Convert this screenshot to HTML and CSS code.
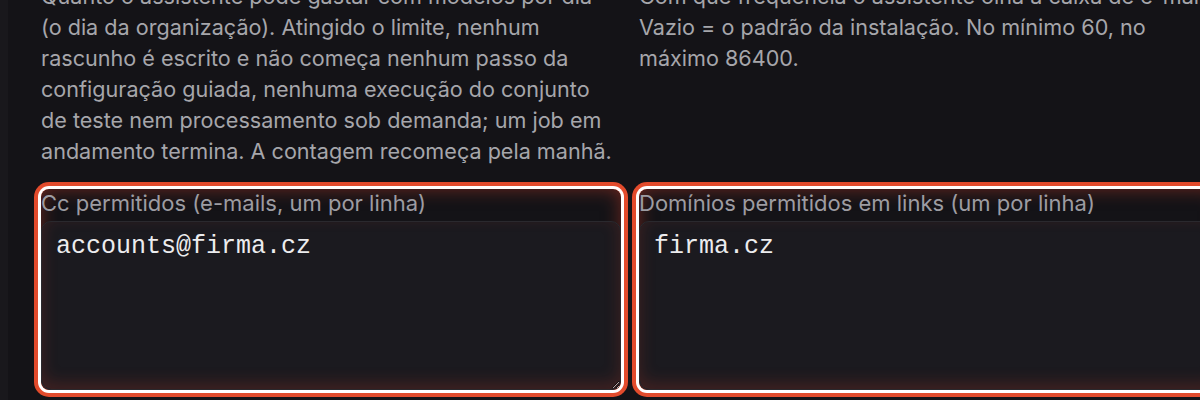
FILE: index.html
```html
<!DOCTYPE html>
<html lang="pt">
<head>
<meta charset="utf-8">
<title>Configurações</title>
<link rel="stylesheet" href="styles.css">
</head>
<body>
<div class="shell">
  <aside class="edge"></aside>
  <main class="content">
    <div class="grid">
      <p class="help">Quanto o assistente pode gastar com modelos por dia (o dia da organização). Atingido o limite, nenhum rascunho é escrito e não começa nenhum passo da configuração guiada, nenhuma execução do conjunto de teste nem processamento sob demanda; um job em andamento termina. A contagem recomeça pela manhã.</p>
      <p class="help">Com que frequência o assistente olha a caixa de <span class="nw">e-mail.</span> Vazio = o padrão da instalação. No mínimo 60, no máximo 86400.</p>
      <div class="field hl">
        <label class="label" for="cc">Cc permitidos (e-mails, um por linha)</label>
        <textarea id="cc" class="input" spellcheck="false">accounts@firma.cz</textarea>
      </div>
      <div class="field hl">
        <label class="label" for="dom">Domínios permitidos em links (um por linha)</label>
        <textarea id="dom" class="input" spellcheck="false">firma.cz</textarea>
      </div>
    </div>
  </main>
</div>
</body>
</html>
```
FILE: styles.css
```css
html, body {
  margin: 0;
  padding: 0;
  background: #141317;
  color-scheme: dark;
  overflow: hidden;
}
.shell {
  display: flex;
  min-height: 400px;
}
.edge {
  width: 8px;
  flex: none;
  background: #19181c;
}
.content {
  flex: 1;
  padding-left: 33px;
  margin-top: -19px;
}
.grid {
  display: grid;
  grid-template-columns: 580px 580px;
  column-gap: 18px;
  row-gap: 22px;
  width: 1178px;
}
.help {
  margin: 0;
  padding-right: 7px;
  font-family: Inter, "Noto Sans", sans-serif;
  font-size: 21.6px;
  line-height: 31px;
  color: #a6a6ab;
}
.nw {
  white-space: nowrap;
}
.field {
  display: flex;
  flex-direction: column;
  gap: 4px;
  border-radius: 8px;
}
.hl {
  box-shadow: 0 0 0 3px #ffffff, 0 0 0 7px #e24b2c, inset 0 0 18px rgba(200, 60, 40, 0.5);
}
.label {
  font-family: Inter, "Noto Sans", sans-serif;
  font-size: 22px;
  line-height: 28px;
  color: #9d9ca2;
}
.input {
  display: block;
  box-sizing: border-box;
  width: 100%;
  height: 169px;
  margin: 0;
  padding: 10px 14px;
  border: 1px solid #2a292e;
  border-radius: 10px;
  background: #1b1a1f;
  color: #ececee;
  font-family: "Liberation Mono", monospace;
  font-size: 25px;
  line-height: 30px;
  outline: none;
  resize: vertical;
  box-shadow: inset 0 -6px 16px rgba(200, 60, 40, 0.22);
}
```
